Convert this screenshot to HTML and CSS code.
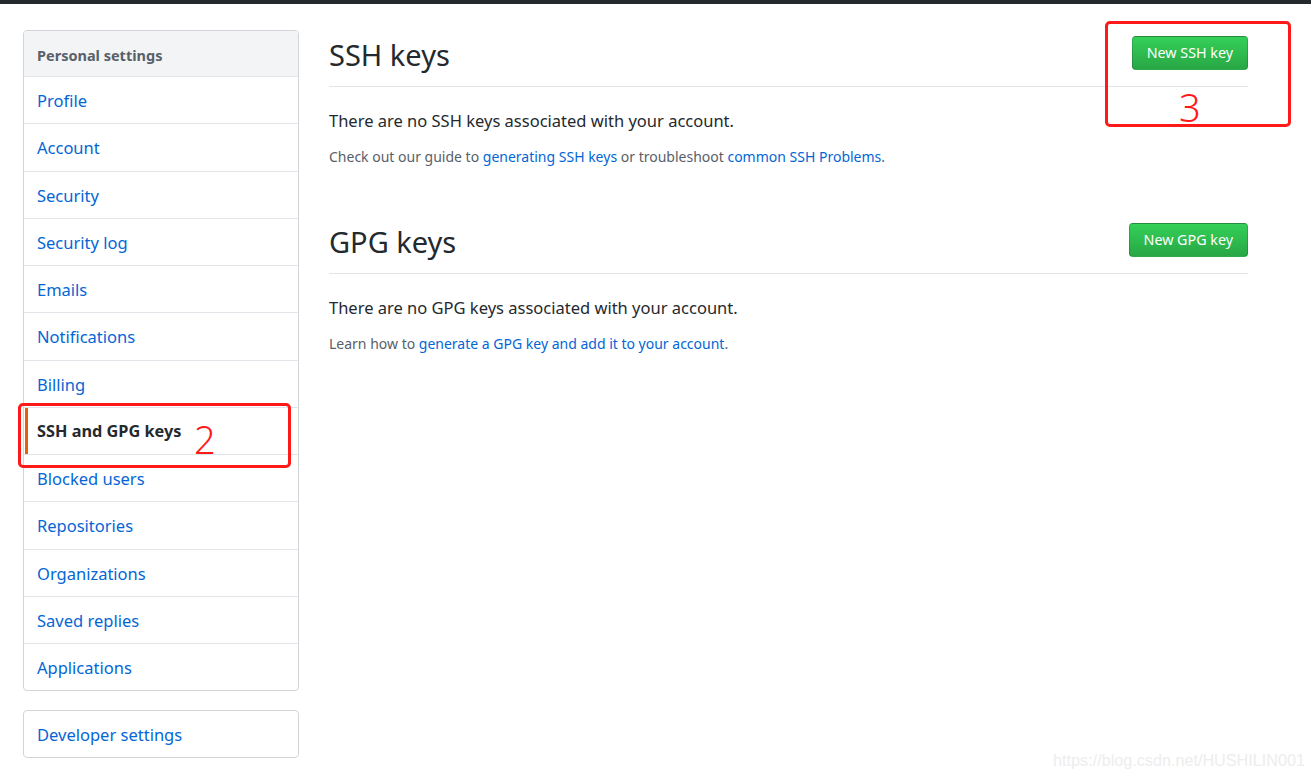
FILE: index.html
```html
<!DOCTYPE html>
<html lang="en">
<head>
<meta charset="utf-8">
<link rel="stylesheet" href="styles.css">
</head>
<body>
<div class="topbar"></div>
<div class="page">
  <div class="sidebar">
    <nav class="menu">
      <div class="menu-head">Personal settings</div>
      <a class="menu-item" href="#">Profile</a>
      <a class="menu-item" href="#">Account</a>
      <a class="menu-item" href="#">Security</a>
      <a class="menu-item" href="#">Security log</a>
      <a class="menu-item" href="#">Emails</a>
      <a class="menu-item" href="#">Notifications</a>
      <a class="menu-item" href="#">Billing</a>
      <a class="menu-item selected" href="#">SSH and GPG keys</a>
      <a class="menu-item" href="#">Blocked users</a>
      <a class="menu-item" href="#">Repositories</a>
      <a class="menu-item" href="#">Organizations</a>
      <a class="menu-item" href="#">Saved replies</a>
      <a class="menu-item" href="#">Applications</a>
    </nav>
    <nav class="menu menu-dev">
      <a class="menu-item first" href="#">Developer settings</a>
    </nav>
  </div>

  <div class="main">
    <div class="subhead">
      <h2 class="subhead-title">SSH keys</h2>
      <a class="btn-green" href="#">New SSH key</a>
    </div>
    <p class="blank">There are no SSH keys associated with your account.</p>
    <p class="note">Check out our guide to <a href="#">generating SSH keys</a> or troubleshoot <a href="#">common SSH Problems</a>.</p>

    <div class="subhead gpg">
      <h2 class="subhead-title">GPG keys</h2>
      <a class="btn-green" href="#">New GPG key</a>
    </div>
    <p class="blank">There are no GPG keys associated with your account.</p>
    <p class="note">Learn how to <a href="#">generate a GPG key and add it to your account</a>.</p>
  </div>
</div>

<div class="mark mark-2"><span>2</span></div>
<div class="mark mark-3"><span>3</span></div>
<div class="watermark">https://blog.csdn.net/HUSHILIN001</div>
</body>
</html>
```

FILE: styles.css
```css
* {box-sizing: border-box;}
body {margin: 0; font-family: "Noto Sans", "Open Sans", sans-serif; color: #24292e; background: #fff;}
a {color: #0366d6; text-decoration: none;}

.topbar {height: 4px; background: #24292e;}

.page {display: flex; gap: 30px; padding: 26px 0 0 23px; width: 1248px;}

.sidebar {width: 276px; flex: none;}
.menu {display: block; border: 1px solid #d1d5da; border-radius: 4px; background: #fff; overflow: hidden;}
.menu-head {height: 45px; line-height: 48px; padding: 0 13px; background: #f3f4f6; color: #586069; font-size: 14.5px; font-weight: 700;}
.menu-item {display: block; position: relative; height: 47.25px; line-height: 47px; padding: 0 13px; border-top: 1px solid #e1e4e8; font-size: 16.5px;}
.menu-item.first {border-top: 0; height: 46px;}
.menu-item.selected {color: #24292e; font-weight: 700; font-size: 16.3px;}
.menu-item.selected::before {content: ""; position: absolute; left: 1px; top: 0; bottom: 0; width: 3px; background: #e36209;}
.menu-dev {margin-top: 19px;}

.main {flex: 1; min-width: 0;}
.subhead {display: flex; align-items: flex-start; padding-bottom: 10px; margin-bottom: 20px; border-bottom: 1px solid #e1e4e8;}
.subhead.gpg {margin-top: 49px;}
.subhead-title {flex: 1; margin: 0; padding-top: 4px; font-size: 29px; font-weight: 400; line-height: 42px;}
.btn-green {margin-top: 6px; display: inline-block; height: 34px; line-height: 32px; padding: 0 14px; border: 1px solid rgba(27,31,35,.2); border-radius: 4px; background: linear-gradient(#34d058, #28a745); color: #fff; font-size: 14.3px;}

.blank {margin: 0 0 12px; font-size: 16.5px; line-height: 27px;}
.note {margin: 0; font-size: 14px; line-height: 22px; color: #586069;}

.mark {position: absolute; border: 3px solid #ff1a1a; border-radius: 5px; color: #ff1a1a; font-size: 38px; line-height: 1;}
.mark span {position: absolute; font-family: "Noto Sans", sans-serif; font-weight: 300;}
.mark-2 {left: 18px; top: 403px; width: 273px; height: 65px;}
.mark-2 span {left: 173px; top: 14px;}
.mark-3 {left: 1105px; top: 21px; width: 186px; height: 106px;}
.mark-3 span {left: 71px; top: 64px;}

.watermark {position: absolute; right: 6px; top: 751px; color: #ededed; font-family: "Liberation Sans", Arial, sans-serif; font-size: 16.2px;}
```
